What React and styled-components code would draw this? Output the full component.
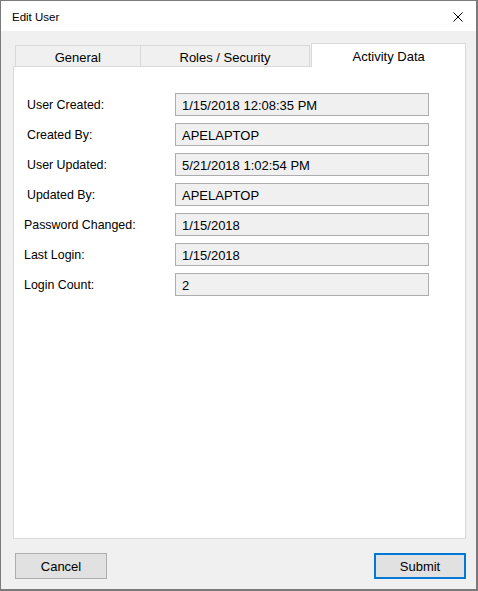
import React from 'react';
import styled, { createGlobalStyle } from 'styled-components';

const GlobalStyle = createGlobalStyle`
  html, body {
    margin: 0;
    padding: 0;
    background: #f0f0f0;
  }
  * {
    box-sizing: border-box;
  }
`

const Window = styled.div`
  width: 478px;
  height: 591px;
  display: flex;
  flex-direction: column;
  background: #f0f0f0;
  border-style: solid;
  border-color: #7a7a7a;
  border-width: 1px 2px 2px 1px;
  font-family: "Liberation Sans", Arial, sans-serif;
  color: #000;
`

const TitleBar = styled.div`
  height: 30px;
  display: flex;
  align-items: center;
  justify-content: space-between;
  background: #fff;
  padding: 1px 0 0 11px;
`

const Title = styled.span`
  font-size: 11.5px;
  color: #000;
`

const CloseButton = styled.div`
  width: 46px;
  height: 30px;
  display: flex;
  align-items: center;
  justify-content: center;
  padding-left: 10px;
`

const Body = styled.div`
  flex: 1;
  display: flex;
  flex-direction: column;
  padding: 12px 10px 10px 12px;
`

const TabStrip = styled.div`
  display: flex;
  align-items: flex-end;
  height: 23px;
  padding-left: 2px;
  position: relative;
  z-index: 1;
`

const Tab = styled.div`
  width: ${p => p.w}px;
  height: ${p => (p.active ? 24 : 21)}px;
  margin-bottom: ${p => (p.active ? -1 : 0)}px;
  display: flex;
  align-items: center;
  justify-content: center;
  padding-top: 2px;
  font-size: 13px;
  background: ${p => (p.active ? '#fff' : '#f0f0f0')};
  border: 1px solid #d9d9d9;
  border-bottom: none;
  border-right: ${p => (p.last ? '1px solid #d9d9d9' : 'none')};
  margin-left: ${p => (p.active ? 1 : 0)}px;
`

const Panel = styled.div`
  flex: 1;
  background: #fff;
  border: 1px solid #d9d9d9;
  padding-top: 26px;
  display: flex;
  flex-direction: column;
  gap: 7px;
`

const Row = styled.div`
  display: grid;
  grid-template-columns: 161px 254px;
  align-items: center;
  height: 23px;
`

const Label = styled.label`
  font-size: 12.4px;
  padding-left: ${p => p.indent}px;
  padding-top: 1px;
`

const Field = styled.div`
  height: 23px;
  display: flex;
  align-items: center;
  padding: 1px 0 0 6px;
  background: #f0f0f0;
  border: 1px solid #adadad;
  font-size: 13px;
`

const Footer = styled.div`
  display: flex;
  justify-content: space-between;
  margin-top: 14px;
  padding-left: 2px;
`

const Button = styled.button`
  width: 92px;
  height: 26px;
  background: #e1e1e1;
  border: ${p => (p.primary ? '2px solid #0078d7' : '1px solid #adadad')};
  font-family: "Liberation Sans", Arial, sans-serif;
  font-size: 13px;
  color: #000;
  padding: 1px 0 0;
  cursor: pointer;
`

const fields = [
  { label: 'User Created:', value: '1/15/2018 12:08:35 PM', indent: 13 },
  { label: 'Created By:', value: 'APELAPTOP', indent: 13 },
  { label: 'User Updated:', value: '5/21/2018 1:02:54 PM', indent: 13 },
  { label: 'Updated By:', value: 'APELAPTOP', indent: 13 },
  { label: 'Password Changed:', value: '1/15/2018', indent: 10 },
  { label: 'Last Login:', value: '1/15/2018', indent: 10 },
  { label: 'Login Count:', value: '2', indent: 10 },
]

export default function App() {
  return (
    <Window>
      <GlobalStyle />
      <TitleBar>
        <Title>Edit User</Title>
        <CloseButton>
          <svg width="10" height="10" viewBox="0 0 10 10">
            <path d="M0.5 0.5 L9.5 9.5 M9.5 0.5 L0.5 9.5" stroke="#000" strokeWidth="1" fill="none" />
          </svg>
        </CloseButton>
      </TitleBar>
      <Body>
        <TabStrip>
          <Tab w={125}>General</Tab>
          <Tab w={171} last>Roles / Security</Tab>
          <Tab w={155} active last>Activity Data</Tab>
        </TabStrip>
        <Panel>
          {fields.map((f) => (
            <Row key={f.label}>
              <Label indent={f.indent}>{f.label}</Label>
              <Field>{f.value}</Field>
            </Row>
          ))}
        </Panel>
        <Footer>
          <Button>Cancel</Button>
          <Button primary>Submit</Button>
        </Footer>
      </Body>
    </Window>
  );
}
